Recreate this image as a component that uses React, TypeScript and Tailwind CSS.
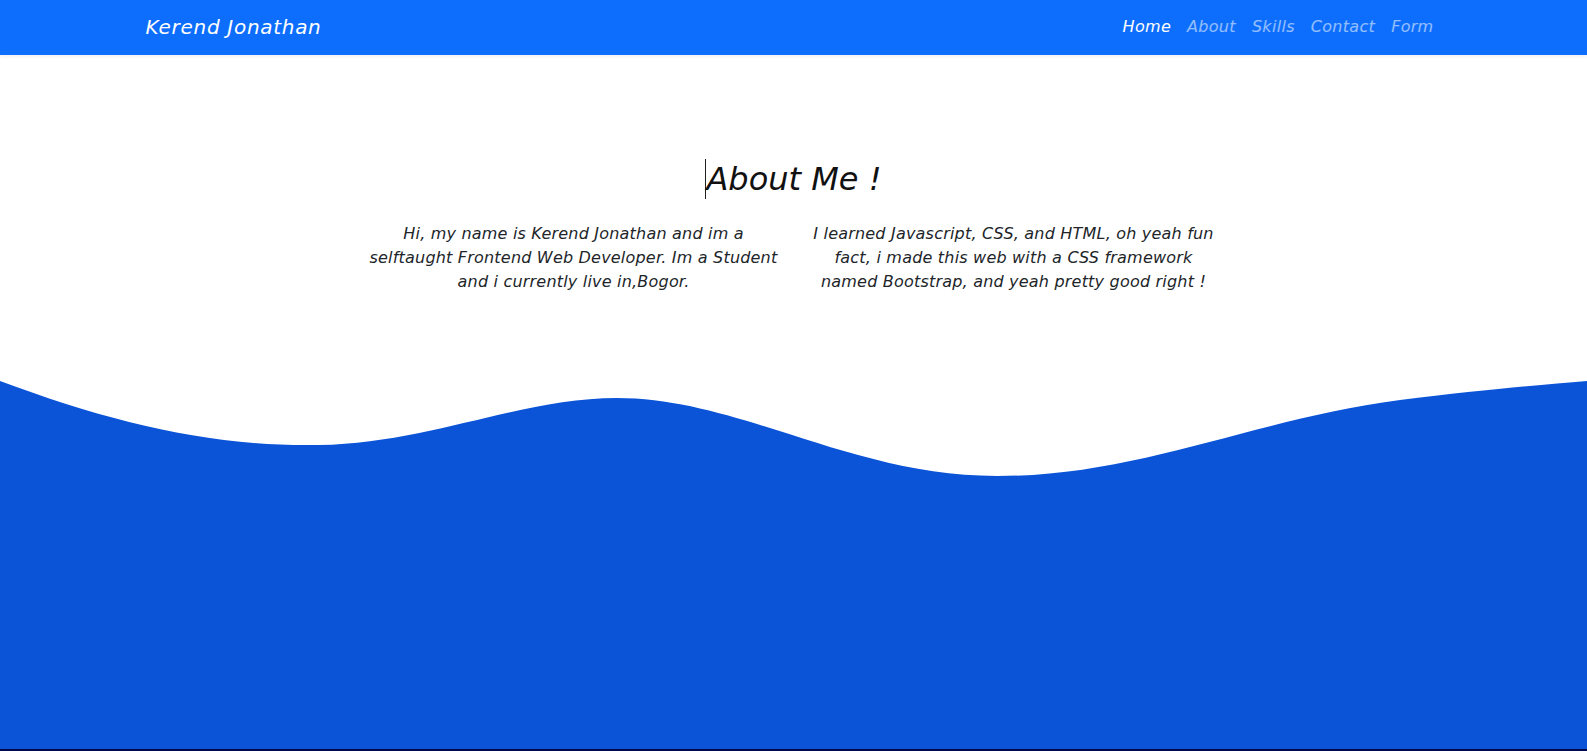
export default function App() {
  const links = ["Home", "About", "Skills", "Contact", "Form"];

  return (
    <div className="min-h-screen bg-white italic text-[#212529] font-['DejaVu_Sans','Noto_Sans',sans-serif]">
      {/* Navbar */}
      <nav className="h-[55px] bg-[#0d6efd] shadow-[0_2px_3px_rgba(0,0,0,0.06)] relative z-10">
        <div className="max-w-[1320px] mx-auto px-3 h-full flex items-center justify-between">
          <a className="text-[20px] tracking-[0.7px] text-white -mt-[2px]">Kerend Jonathan</a>
          <ul className="flex -mt-[2px]">
            {links.map((l, i) => (
              <li key={l}>
                <a className={"px-2 text-[16px] tracking-[0.3px] " + (i === 0 ? "text-white" : "text-white/55")}>{l}</a>
              </li>
            ))}
          </ul>
        </div>
      </nav>

      {/* About section */}
      <section className="h-[320px] pt-[105px]">
        <h2 className="text-center text-[32px] leading-[38px] font-light text-[#111] mb-[23px]">
          <span className="inline-block w-px h-[40px] bg-[#222] align-middle -mt-[4px]" />
          About Me !
        </h2>
        <div className="max-w-[1320px] mx-auto px-3">
          <div className="flex justify-center">
            <p className="w-[440px] px-3 text-center text-[16px] tracking-[0.2px] leading-6">
              Hi, my name is Kerend Jonathan and im a selftaught Frontend Web Developer. Im a Student and i currently live in,Bogor.
            </p>
            <p className="w-[440px] px-3 text-center text-[16px] tracking-[0.2px] leading-6">
              I learned Javascript, CSS, and HTML, oh yeah fun fact, i made this web with a CSS framework named Bootstrap, and yeah pretty good right !
            </p>
          </div>
        </div>
      </section>

      {/* Wave */}
      <svg
        className="block w-full h-[105px]"
        viewBox="0 375 1587 105"
        preserveAspectRatio="none"
      >
        <path
          fill="#0b54d8"
          d="M0,381 C110,422 210,447 319,445 C430,443 520,398 617,398 C740,398 850,476 997,476 C1140,476 1250,420 1400,400 C1480,390 1540,385 1587,381 L1587,480 L0,480 Z"
        />
      </svg>
      <div className="h-[269px] bg-[#0b54d8]" />
      <div className="h-[200px] bg-[#000848]" />
    </div>
  );
}
